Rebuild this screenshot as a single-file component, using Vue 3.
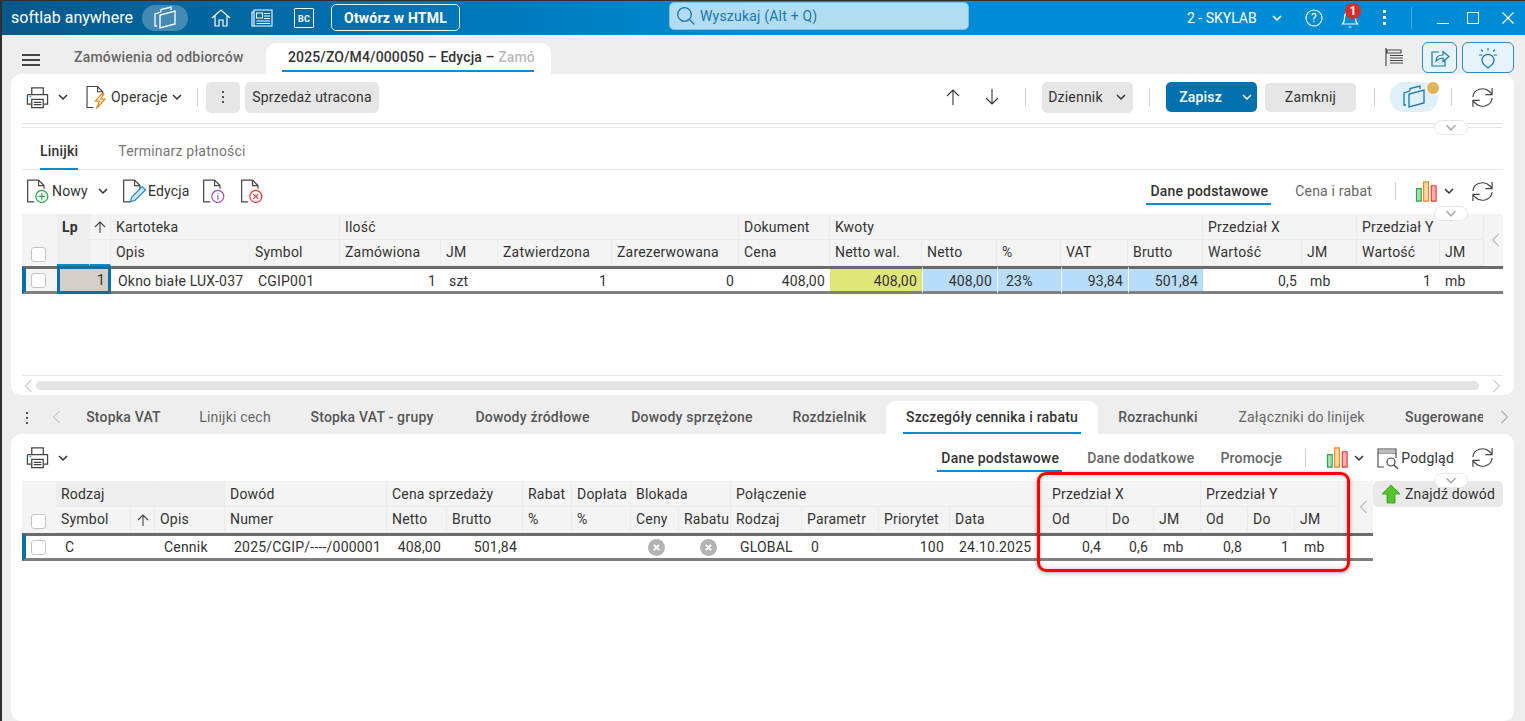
<script setup>
const tabs2 = [
  { t: 'Stopka VAT', w: 113 }, { t: 'Linijki cech', w: 110, light: true }, { t: 'Stopka VAT - grupy', w: 164 },
  { t: 'Dowody źródłowe', w: 157 }, { t: 'Dowody sprzężone', w: 162 }, { t: 'Rozdzielnik', w: 113 },
  { t: 'Szczegóły cennika i rabatu', w: 212, active: true }, { t: 'Rozrachunki', w: 120 },
  { t: 'Załączniki do linijek', w: 167, light: true }, { t: 'Sugerowane powiązania', w: 98, clip: true }
]
const g1 = [
  { t: 'Kartoteka', s: 2 }, { t: 'Ilość', s: 4 }, { t: 'Dokument', s: 1 }, { t: 'Kwoty', s: 5 },
  { t: 'Przedział X', s: 2 }, { t: 'Przedział Y', s: 2 }
]
const h1 = ['Opis', 'Symbol', 'Zamówiona', 'JM', 'Zatwierdzona', 'Zarezerwowana', 'Cena', 'Netto wal.', 'Netto', '%', 'VAT', 'Brutto', 'Wartość', 'JM', 'Wartość', 'JM']
const d1 = [
  { t: 'Okno białe LUX-037', c: 'opis' }, { t: 'CGIP001' }, { t: '1', r: 1 }, { t: 'szt' }, { t: '1', r: 1 }, { t: '0', r: 1 },
  { t: '408,00', r: 1 }, { t: '408,00', r: 1, c: 'yellow' }, { t: '408,00', r: 1, c: 'blue' }, { t: '23%', c: 'blue' },
  { t: '93,84', r: 1, c: 'blue' }, { t: '501,84', r: 1, c: 'blue' }, { t: '0,5', r: 1 }, { t: 'mb' }, { t: '1', r: 1, c: 'pr9' }, { t: 'mb', c: 'pl5' }
]
const g2 = [
  { t: 'Dowód', s: 1 }, { t: 'Cena sprzedaży', s: 2 }, { t: 'Rabat', s: 1 }, { t: 'Dopłata', s: 1 }, { t: 'Blokada', s: 2 },
  { t: 'Połączenie', s: 4 }, { t: 'Przedział X', s: 3 }, { t: 'Przedział Y', s: 3 }
]
const h2 = ['Numer', 'Netto', 'Brutto', '%', '%', 'Ceny', 'Rabatu', 'Rodzaj', 'Parametr', 'Priorytet', 'Data', 'Od', 'Do', 'JM', 'Od', 'Do', 'JM']
const d2 = [
  { t: '2025/CGIP/----/000001' }, { t: '408,00', r: 1 }, { t: '501,84', r: 1 }, { t: '' }, { t: '' }, { x: 1, c: 'x1' }, { x: 1, c: 'x2' },
  { t: 'GLOBAL' }, { t: '0' }, { t: '100', r: 1 }, { t: '24.10.2025' }, { t: '0,4', r: 1 }, { t: '0,6', r: 1 }, { t: 'mb' },
  { t: '0,8', r: 1 }, { t: '1', r: 1 }, { t: 'mb' }
]
</script>

<template>
  <div class="window">
    <svg class="defs" width="0" height="0">
      <symbol id="refresh" viewBox="0 0 24 24"><path d="M2 11.500a10 9 0 0 1 17.500-5.500l2.500 2.500M22 2v7h-7M22 12.500a10 9 0 0 1-17.500 5.500L2 15.500M2 22v-7h7" fill="none" stroke="#444" stroke-width="1.200"/></symbol>
      <symbol id="printer" viewBox="0 0 24 24"><path d="M6 9V2h12v7M1.500 9h21v10H18M6 19H1.500V9" fill="none" stroke="#444" stroke-width="1.300"/><path d="M6 14h12v8.500H6zM8 17h8M8 19.500h8" fill="none" stroke="#444" stroke-width="1.300"/><path d="M3.500 11h2" stroke="#2a9ad8" stroke-width="1.500"/></symbol>
      <symbol id="chev" viewBox="0 0 12 8"><path d="M2 2l4 4 4-4" fill="none" stroke="currentColor" stroke-width="1.500"/></symbol>
      <symbol id="chart" viewBox="0 0 24 24"><path d="M1.500 9h5v13h-5z" fill="#a8dcb4" stroke="#27a844" stroke-width="1.200"/><path d="M9 2h5v20H9z" fill="#fbd9a8" stroke="#ee8a1c" stroke-width="1.200"/><path d="M17 6h5v16h-5z" fill="#f7b0b0" stroke="#e53935" stroke-width="1.200"/></symbol>
      <symbol id="stack" viewBox="0 0 26 24"><path d="M9 6V3.500L19 1v3M5 20H3V8l6-2M8 22V9l15-4v13z" fill="none" stroke="currentColor" stroke-width="1.300"/></symbol>
      <symbol id="doc" viewBox="0 0 24 24"><path d="M8 22H2V2h10l5 5v3M12 2v5h5" fill="none" stroke="#444" stroke-width="1.100"/></symbol>
    </svg>

    <header class="titlebar">
      <div class="tb-left">
        <span class="brand">softlab anywhere</span>
        <span class="stack-pill"><svg width="26" height="24"><use href="#stack"/></svg></span>
        <svg class="tb-home" width="20" height="20" viewBox="0 0 20 20"><path d="M1 10l9-8 9 8M4 8v10h4v-6h4v6h4V8" fill="none" stroke="#fff" stroke-width="1.200"/></svg>
        <svg class="tb-news" width="22" height="19" viewBox="0 0 22 19"><path d="M3 2h18v16H3zM3 4H1v14h2M5.500 5h6v5h-6zM13 5.500h6M13 8h6M13 10.500h6M5.500 13h13.500M5.500 15.500h13.500" fill="none" stroke="#fff" stroke-width="1.100"/></svg>
        <span class="bc">BC</span>
        <button class="html-btn">Otwórz w HTML</button>
      </div>
      <div class="search">
        <svg width="20" height="20" viewBox="0 0 20 20"><circle cx="8.500" cy="8.500" r="6.800" fill="none" stroke="#1878ad" stroke-width="1.300"/><path d="M13.500 13.500l5 5" stroke="#1878ad" stroke-width="1.300"/></svg>
        <span>Wyszukaj (Alt + Q)</span>
      </div>
      <div class="tb-right">
        <span class="company">2 - SKYLAB</span>
        <svg class="c-chev" width="12" height="8"><use href="#chev"/></svg>
        <svg class="help" width="18" height="18" viewBox="0 0 18 18"><circle cx="9" cy="9" r="8" fill="none" stroke="#fff" stroke-width="1.100"/><text x="9" y="13.200" text-anchor="middle" font-size="12" fill="#fff" font-family="Roboto">?</text></svg>
        <span class="bell-wrap">
          <svg width="18" height="22" viewBox="0 0 18 22"><path d="M1.500 17c1.500-1.500 2-3 2-6 0-4 2-7 5.500-7s5.500 3 5.500 7c0 3 .5 4.500 2 6zM7.500 20h3" fill="none" stroke="#fff" stroke-width="1.200"/></svg>
          <span class="badge">1</span>
        </span>
        <span class="kebab light"><i></i><i></i><i></i></span>
        <span class="tb-sep"></span>
        <span class="min"></span>
        <span class="max"></span>
        <svg class="close" width="12" height="12" viewBox="0 0 12 12"><path d="M.5.500l11 11M11.500.500l-11 11" stroke="#fff" stroke-width="1.200"/></svg>
      </div>
    </header>

    <div class="tabs1">
      <span class="burger"><i></i><i></i><i></i></span>
      <span class="tab1">Zamówienia od odbiorców</span>
      <span class="tab1-active"><span class="tab1-text">2025/ZO/M4/000050 – Edycja – <em>Zamó</em></span></span>
      <svg class="list-ico" width="20" height="20" viewBox="0 0 20 20"><path d="M2 1v18M3 3h14v3H3zM6 8.500h13M6 11h13M6 13.500h13M6 16h13" fill="none" stroke="#444" stroke-width="1.100"/></svg>
      <button class="ico-btn share"><svg width="20" height="20" viewBox="0 0 20 20"><path d="M9 4H2v14h13v-6M6 13c0-4 3-6 7-6V3.500l6 5-6 5V10c-3 0-5 1-7 3z" fill="none" stroke="#1878ad" stroke-width="1.200"/></svg></button>
      <button class="ico-btn bulb"><svg width="24" height="22" viewBox="0 0 24 22"><path d="M9 18.500a6 6 0 1 1 6 0l-3 2.500zM12 1v2.500M3 8h3M18 8h3M5 2.500l2 2M19 2.500l-2 2" fill="none" stroke="#1878ad" stroke-width="1.200"/></svg></button>
    </div>

    <section class="panel panel1">
      <div class="toolbar">
        <svg class="ic-print" width="23" height="23"><use href="#printer"/></svg>
        <svg class="chev ch1" width="12" height="8"><use href="#chev"/></svg>
        <span class="doc-wrap op"><svg width="22" height="24" viewBox="1 1 21 22"><use href="#doc" width="24" height="24"/><path d="M16 9l-6 7h4l-3 7 8-9h-4l3-5z" fill="none" stroke="#ee8a1c" stroke-width="1.200"/></svg></span>
        <span class="lbl op-lbl">Operacje</span>
        <svg class="chev ch2" width="12" height="8"><use href="#chev"/></svg>
        <span class="sep s1"></span>
        <button class="gbtn dots"><span class="kebab"><i></i><i></i><i></i></span></button>
        <button class="gbtn utr">Sprzedaż utracona</button>
        <svg class="arr up" width="16" height="18" viewBox="0 0 16 18"><path d="M8 17V2M2 8l6-6 6 6" fill="none" stroke="#333" stroke-width="1.100"/></svg>
        <svg class="arr down" width="16" height="18" viewBox="0 0 16 18"><path d="M8 1v15M2 10l6 6 6-6" fill="none" stroke="#333" stroke-width="1.100"/></svg>
        <span class="sep s2"></span>
        <button class="gbtn dz"><span>Dziennik</span><svg width="12" height="8"><use href="#chev"/></svg></button>
        <span class="sep s3"></span>
        <button class="save"><span>Zapisz</span><svg width="12" height="8"><use href="#chev"/></svg></button>
        <button class="gbtn zamk">Zamknij</button>
        <span class="sep s4"></span>
        <span class="cube"><svg width="26" height="24"><use href="#stack"/></svg><span class="dot"></span></span>
        <span class="sep s5"></span>
        <svg class="rf" width="23" height="23"><use href="#refresh"/></svg>
      </div>
      <div class="rule double"><span class="pill p1"><svg width="14" height="9"><use href="#chev"/></svg></span></div>

      <div class="subtabs">
        <span class="st active">Linijki</span>
        <span class="st">Terminarz płatności</span>
      </div>

      <div class="toolbar2">
        <span class="doc-wrap n"><svg width="24" height="24" viewBox="1 1 21 22"><use href="#doc" width="24" height="24"/><circle cx="15" cy="17" r="5.500" fill="#fff" stroke="#27a844" stroke-width="1.100"/><path d="M15 14v6M12 17h6" stroke="#27a844" stroke-width="1.100"/></svg></span>
        <span class="lbl">Nowy</span>
        <svg class="chev nch" width="12" height="8"><use href="#chev"/></svg>
        <span class="doc-wrap e"><svg width="24" height="24" viewBox="1 1 21 22"><use href="#doc" width="24" height="24"/><path d="M8 22l1.500-4.500L19 8l3 3-9.500 9.500z" fill="#cfe6f7" stroke="#1e88d2" stroke-width="1.100"/></svg></span>
        <span class="lbl">Edycja</span>
        <span class="doc-wrap i"><svg width="24" height="24" viewBox="1 1 21 22"><use href="#doc" width="24" height="24"/><circle cx="15" cy="17" r="5.500" fill="#fff" stroke="#a04fb5" stroke-width="1.100"/><path d="M15 16v4M15 14v1" stroke="#a04fb5" stroke-width="1.100"/></svg></span>
        <span class="doc-wrap x"><svg width="24" height="24" viewBox="1 1 21 22"><use href="#doc" width="24" height="24"/><circle cx="15" cy="17" r="5.500" fill="#fff" stroke="#e53935" stroke-width="1.100"/><path d="M12.800 14.800l4.400 4.400M17.200 14.800l-4.400 4.400" stroke="#e53935" stroke-width="1.100"/></svg></span>
        <span class="view active v1">Dane podstawowe</span>
        <span class="view v2">Cena i rabat</span>
        <span class="sep s6"></span>
        <svg class="ch-ic" width="23" height="23"><use href="#chart"/></svg>
        <svg class="chev ch3" width="12" height="8"><use href="#chev"/></svg>
        <svg class="rf r2i" width="23" height="23"><use href="#refresh"/></svg>
      </div>

      <div class="grid g-top">
        <div class="hc blank"><span class="cb hcb"></span></div>
        <div class="hc lp">Lp</div>
        <div class="hc sort r1"><svg width="14" height="14" viewBox="0 0 14 14"><path d="M7 13V2M2 7l5-5 5 5" fill="none" stroke="#444" stroke-width="1.100"/></svg></div>
        <div v-for="g in g1" :key="g.t" class="hc r1" :style="{ gridColumn: 'span ' + g.s }">{{ g.t }}</div>
        <div class="hc tail t20"><svg width="9" height="14" viewBox="0 0 9 14"><path d="M7.500 1L1.500 7l6 6" fill="none" stroke="#bbb" stroke-width="1.100"/></svg></div>
        <div class="hc lp-ext r2"></div>
        <div v-for="(h, i) in h1" :key="'h1' + i" class="hc sub r2">{{ h }}</div>

        <div class="dc first r3"><span class="cb"></span></div>
        <div class="dc lpv r3 span2">1</div>
        <div v-for="(d, i) in d1" :key="'d1' + i" class="dc r3" :class="[d.c, { right: d.r }]">{{ d.t }}</div>
        <div class="dc r3"></div>
      </div>
      <span class="pill pm"><svg width="14" height="9"><use href="#chev"/></svg></span>

      <div class="spacer"></div>
      <div class="rule"></div>
      <div class="hscroll">
        <svg width="9" height="14" viewBox="0 0 9 14"><path d="M7.500 1L1.500 7l6 6" fill="none" stroke="#ccc" stroke-width="1.100"/></svg>
        <span class="track"></span>
        <svg width="9" height="14" viewBox="0 0 9 14"><path d="M1.500 1l6 6-6 6" fill="none" stroke="#ccc" stroke-width="1.100"/></svg>
      </div>
    </section>

    <div class="tabs2">
      <span class="kebab k2"><i></i><i></i><i></i></span>
      <svg class="tl" width="9" height="14" viewBox="0 0 9 14"><path d="M7.500 1L1.500 7l6 6" fill="none" stroke="#ccc" stroke-width="1.100"/></svg>
      <span v-for="t in tabs2" :key="t.t" class="tab2" :class="{ active: t.active, light: t.light, clip: t.clip }" :style="{ width: t.w + 'px' }"><span class="tab2-t">{{ t.t }}</span></span>
      <svg class="tr" width="9" height="14" viewBox="0 0 9 14"><path d="M1.500 1l6 6-6 6" fill="none" stroke="#aaa" stroke-width="1.100"/></svg>
    </div>

    <section class="panel panel2">
      <div class="toolbar3">
        <svg class="ic-print" width="23" height="23"><use href="#printer"/></svg>
        <svg class="chev pch" width="12" height="8"><use href="#chev"/></svg>
        <span class="view active w1">Dane podstawowe</span>
        <span class="view w2">Dane dodatkowe</span>
        <span class="view w3">Promocje</span>
        <span class="sep s7"></span>
        <svg class="ch-ic2" width="23" height="23"><use href="#chart"/></svg>
        <svg class="chev ch4" width="12" height="8"><use href="#chev"/></svg>
        <svg class="pod-ic" width="22" height="22" viewBox="0 0 22 22"><path d="M7 20H1V2h18v9M1 6h18" fill="none" stroke="#444" stroke-width="1.100"/><path d="M2 3h16v3H2z" fill="#bbb"/><circle cx="14" cy="15" r="4" fill="none" stroke="#444" stroke-width="1.200"/><path d="M17 18l4 4" stroke="#444" stroke-width="1.300"/></svg>
        <span class="lbl pod">Podgląd</span>
        <svg class="rf r3i" width="23" height="23"><use href="#refresh"/></svg>
      </div>

      <div class="tbl-row">
        <div class="grid g-bot">
          <div class="hc blank"><span class="cb hcb"></span></div>
          <div class="hc dark r1 span2">Rodzaj</div>
          <div class="hc dark r1"></div>
          <div v-for="g in g2" :key="g.t" class="hc r1" :style="{ gridColumn: 'span ' + g.s }">{{ g.t }}</div>
          <div class="hc tail t22"><svg width="9" height="14" viewBox="0 0 9 14"><path d="M7.500 1L1.500 7l6 6" fill="none" stroke="#bbb" stroke-width="1.100"/></svg></div>
          <div class="hc sub r2">Symbol</div>
          <div class="hc sub sort2 r2"><svg width="14" height="14" viewBox="0 0 14 14"><path d="M7 13V2M2 7l5-5 5 5" fill="none" stroke="#444" stroke-width="1.100"/></svg></div>
          <div class="hc sub r2">Opis</div>
          <div v-for="(h, i) in h2" :key="'h2' + i" class="hc sub r2">{{ h }}</div>

          <div class="dc first r3"><span class="cb"></span></div>
          <div class="dc r3 span2 sym">C</div>
          <div class="dc r3">Cennik</div>
          <div v-for="(d, i) in d2" :key="'d2' + i" class="dc r3" :class="[d.c, { right: d.r, center: d.x }]">
            <svg v-if="d.x" width="17" height="17" viewBox="0 0 17 17"><circle cx="8.500" cy="8.500" r="8.500" fill="#b3b3b3"/><path d="M5.800 5.800l5.400 5.400M11.200 5.800l-5.400 5.400" stroke="#fff" stroke-width="1.800"/></svg>
            <template v-else>{{ d.t }}</template>
          </div>
          <div class="dc r3"></div>
        </div>
        <button class="find">
          <svg width="20" height="20" viewBox="0 0 20 20"><path d="M10 1l9 9h-5v9H6v-9H1z" fill="#57c22c" stroke="#2f9a12" stroke-width=".8"/></svg>
          <span>Znajdź dowód</span>
        </button>
      </div>

      <span class="pill p2"><svg width="14" height="9"><use href="#chev"/></svg></span>
      <div class="redbox"></div>
    </section>
  </div>
</template>

<style>
html, body { margin: 0; background: #eee; overflow: hidden; }
</style>

<style scoped>
* { box-sizing: border-box; }
.window { position: relative; width: 1525px; height: 721px; background: #eee; overflow: hidden; font: 400 14px/1 Roboto, sans-serif; color: #333; letter-spacing: .2px; }
.window::after { content: ""; position: absolute; inset: 0; border-left: 2px solid #2f2f2f; border-top: 1px solid #2f2f2f; pointer-events: none; }
.defs { position: absolute; }
button { font: inherit; letter-spacing: inherit; border: 0; padding: 0; color: inherit; }
i { display: block; }

.titlebar { height: 35px; display: grid; grid-template-columns: 669px 300px 1fr; align-items: center; background: linear-gradient(90deg, #06588a 0, #0079bd 33%, #008cd4 50%, #008cd4 100%); color: #fff; }
.tb-left { display: flex; align-items: center; padding-left: 11px; }
.brand { font-size: 16px; letter-spacing: 0; width: 131px; }
.stack-pill { width: 46px; height: 26px; border-radius: 13px; background: rgba(255,255,255,.25); display: flex; align-items: center; justify-content: center; color: #fff; }
.tb-home { margin-left: 23px; }
.tb-news { margin-left: 20px; }
.bc { margin-left: 21px; width: 20px; height: 20px; border: 1px solid #fff; border-radius: 1px; font-size: 9px; font-weight: 700; display: flex; align-items: flex-end; justify-content: center; padding-bottom: 3px; }
.html-btn { margin-left: 17px; width: 129px; height: 27px; background: transparent; border: 1.500px solid #e3f3fb; border-radius: 5px; color: #fff; font-weight: 700; font-size: 14px; }
.search { height: 28px; margin-top: -3px; background: #b2dcf2; border-radius: 5px; border: 1px solid #79c1e8; display: flex; align-items: center; gap: 4px; padding-left: 6px; color: #1878ad; font-size: 14px; }
.tb-right { display: flex; align-items: center; padding-left: 218px; position: relative; height: 35px; }
.company { width: 71px; font-size: 14px; letter-spacing: 0; }
.c-chev { margin-left: 13px; color: #fff; }
.help { margin-left: 22px; }
.bell-wrap { position: relative; margin-left: 18px; height: 22px; display: block; }
.badge { position: absolute; left: 4px; top: -4px; width: 16px; height: 16px; background: #d32f2f; border-radius: 50%; font-size: 12px; font-weight: 700; color: #fff; display: flex; align-items: center; justify-content: center; letter-spacing: 0; }
.kebab { display: inline-flex; flex-direction: column; gap: 3px; align-items: center; }
.kebab i { width: 2px; height: 2px; background: #555; }
.kebab.light { margin-left: 24px; }
.kebab.light i { width: 3px; height: 3px; background: #fff; }
.tb-sep { width: 1px; height: 22px; background: rgba(255,255,255,.25); margin-left: 25px; }
.min { margin-left: 25px; width: 12px; height: 9px; border-bottom: 1px solid #fff; margin-top: 3px; }
.max { margin-left: 18px; width: 12px; height: 12px; border: 1px solid #fff; }
.close { margin-left: 23px; }

.tabs1 { height: 39px; display: flex; align-items: flex-end; position: relative; }
.burger { position: relative; top: -8px; margin-left: 22px; width: 18px; display: flex; flex-direction: column; gap: 3px; }
.burger i { height: 2px; background: #444; }
.tab1 { margin-left: 34px; width: 192px; height: 31px; color: #666; font-weight: 500; line-height: 28px; }
.tab1-active { width: 285px; height: 31px; background: #fff; border-radius: 10px 10px 0 0; padding: 0 17px 0 16px; }
.tab1-text { display: block; height: 29px; line-height: 28px; border-bottom: 2px solid #0c8ad0; padding-left: 6px; white-space: nowrap; font-weight: 500; color: #333; letter-spacing: .12px; overflow: hidden; }
.tab1-text em { font-style: normal; color: #bbb; }
.list-ico { position: absolute; left: 1384px; top: 12px; }
.ico-btn { position: absolute; top: 7px; height: 31px; background: #e6f3fa; border: 1px solid #2b89bd; border-radius: 6px; display: flex; align-items: center; justify-content: center; }
.share { left: 1422px; width: 35px; }
.bulb { left: 1462px; width: 52px; }

.panel { position: relative; margin: 0 11px; background: #fff; border-radius: 10px; }
.panel1 { height: 321px; padding: 0 11px; }
.toolbar { height: 49px; position: relative; display: flex; align-items: center; padding: 0 0 3px 4px; }
.ic-print { flex: none; }
.chev { color: #333; flex: none; }
.ch1 { margin-left: 8px; }
.doc-wrap { display: flex; flex: none; }
.op { margin-left: 17px; }
.lbl { white-space: nowrap; }
.op-lbl { margin-left: 3px; width: 55px; }
.ch2 { margin-left: 5px; }
.sep { width: 1px; height: 18px; background: #cfcfcf; flex: none; }
.s1 { margin-left: 14px; }
.gbtn { height: 31px; background: #e6e6e6; border-radius: 5px; flex: none; color: #333; }
.dots { margin-left: 8px; width: 34px; display: flex; align-items: center; justify-content: center; }
.utr { margin-left: 5px; width: 134px; }
.arr { flex: none; }
.up { margin-left: 566px; }
.down { margin-left: 23px; }
.s2 { margin-left: 25px; }
.dz { margin-left: 16px; width: 91px; display: flex; align-items: center; justify-content: center; gap: 12px; }
.s3 { margin-left: 16px; height: 18px; }
.save { margin-left: 16px; width: 91px; height: 30px; background: #0271ad; color: #fff; border-radius: 5px; display: flex; align-items: center; justify-content: flex-end; gap: 19px; padding-right: 4px; font-weight: 500; flex: none; }
.zamk { margin-left: 8px; width: 91px; height: 29px; }
.s4 { margin-left: 18px; }
.cube { margin-left: 15px; width: 48px; height: 30px; background: #e0f0f9; border-radius: 14px; position: relative; display: flex; align-items: center; justify-content: center; color: #1878ad; flex: none; }
.dot { position: absolute; right: -2px; top: -1px; width: 14px; height: 14px; background: #e0b45c; border: 1px solid #fff; border-radius: 50%; }
.s5 { margin-left: 13px; }
.rf { flex: none; }
.toolbar .rf { margin-left: 19px; }

.rule { height: 1px; background: #e6e6e6; position: relative; }
.rule.double { height: 5px; border-top: 1px solid #e6e6e6; border-bottom: 1px solid #e6e6e6; background: #fff; }
.pill { position: absolute; width: 34px; height: 15px; background: #fff; border: 1px solid #e6e6e6; border-radius: 8px; color: #aaa; display: flex; align-items: center; justify-content: center; z-index: 3; }
.p1 { left: 1412px; top: -4px; }
.pm { left: 1423px; top: 132px; }
.subtabs { height: 42px; display: flex; align-items: flex-end; border-bottom: 1px solid #e6e6e6; padding-left: 18px; gap: 40px; }
.st { height: 41px; line-height: 46px; color: #777; position: relative; }
.st.active { color: #333; font-weight: 500; }
.st.active::after { content: ""; position: absolute; left: 0; right: 0; bottom: -1px; height: 2px; background: #0c8ad0; }

.toolbar2 { height: 44px; display: flex; align-items: center; padding: 0 9px 2px 4px; position: relative; }
.nch { margin-left: 9px; }
.toolbar2 .lbl { margin-left: 2px; }
.e { margin-left: 13px; }
.i { margin-left: 12px; }
.x { margin-left: 14px; }
.view { color: #666; font-weight: 500; position: relative; flex: none; white-space: nowrap; }
.view.active { color: #333; }
.view.active::after { content: ""; position: absolute; left: -4px; right: -3px; bottom: -7px; height: 2px; background: #0c8ad0; }
.v1 { margin-left: auto; }
.v2 { margin-left: 27px; font-weight: 400; }
.s6 { margin-left: 23px; }
.ch-ic { margin-left: 19px; flex: none; }
.ch3 { margin-left: 5px; }
.toolbar2 .rf { margin-left: 16px; }

.grid { display: grid; grid-template-rows: 26px 26px 28px; }
.g-top { grid-template-columns: 35px 33px 21px 139px 90px 101px 57px 114px 127px 91px 92px 75px 64px 67px 75px 99px 55px 83px 44px 19px; }
.g-bot { grid-template-columns: 34px 75px 24px 70px 162px 60px 76px 49px 59px 48px 52px 71px 77px 71px 97px 60px 47px 47px 47px 47px 44px 34px; width: 1351px; flex: none; }
.r1 { grid-row: 1; }
.r2 { grid-row: 2; }
.r3 { grid-row: 3; }
.span2 { grid-column: span 2; }
.t20 { grid-column: 20; grid-row: 1 / 3; }
.t22 { grid-column: 22; grid-row: 1 / 3; }
.hc { background: #f4f4f4; border-right: 1px solid #ececec; border-bottom: 1px solid #ececec; padding: 0 5px; display: flex; align-items: center; white-space: nowrap; overflow: hidden; color: #333; }
.hc.sub { padding-bottom: 2px; }
.blank { grid-column: 1; grid-row: 1 / 3; align-items: flex-end; border-bottom: 0; padding: 0 0 4px 9px; border-right-color: transparent; }
.lp { grid-column: 2; grid-row: 1 / 3; font-weight: 700; align-items: flex-start; padding-top: 6px; background: #eee; border-bottom: 2px solid #0c8ad0; }
.lp-ext { grid-column: 3; background: #f4f4f4; border-bottom: 2px solid #0c8ad0; }
.sort { background: #f4f4f4; justify-content: center; padding: 0; }
.tail { justify-content: center; padding: 0 0 0 4px; border: 0; }
.t22.tail { padding-left: 14px; }
.dark { background: #eee; }
.hc.sort2 { padding: 0; justify-content: center; }
.cb { display: block; width: 15px; height: 15px; border: 1px solid #c4c4c4; border-radius: 3px; background: #fff; }
.dc { background: #fff; border-top: 3px solid #6b6b6b; border-bottom: 3px solid #808080; padding: 0 5px 0 8px; display: flex; align-items: center; white-space: nowrap; }
.g-top .dc { padding-top: 1px; }
.dc.right { justify-content: flex-end; padding-left: 0; }
.dc.center { justify-content: center; padding: 0; }
.dc.first { background: #f4f4f4; padding: 0 0 0 5px; border-left: 4px solid #0c6ea6; }
.g-bot .dc.first { background: #fff; }
.dc.lpv { background: #d4d0c9; border: 3px solid #0c6ea6; justify-content: flex-end; padding: 0 3px 0 0; }
.dc.opis { padding-left: 7px; }
.dc.pr9 { padding-right: 9px; }
.dc.pl5 { padding-left: 5px; }
.yellow { background: #dfe678; }
.blue { background: #b9dcf8; border-left: 1px solid #fff; }
.spacer { height: 81px; }
.hscroll { height: 19px; display: flex; align-items: center; padding-left: 2px; }
.track { margin-left: 3px; width: 1443px; height: 9px; border-radius: 5px; background: #e4e4e4; margin-right: 13px; }

.tabs2 { height: 39px; display: flex; align-items: flex-end; position: relative; padding-left: 67px; }
.k2 { position: absolute; left: 26px; top: 17px; }
.tl { position: absolute; left: 52px; top: 15px; }
.tr { position: absolute; left: 1500px; top: 15px; }
.tab2 { height: 33px; flex: none; color: #555; font-weight: 500; display: block; line-height: 32px; text-align: center; overflow: hidden; white-space: nowrap; }
.tab2.light { font-weight: 400; color: #666; }
.tab2.active { background: #fff; border-radius: 10px 10px 0 0; color: #333; padding: 0 17px; }
.tab2.clip { text-align: left; padding-left: 20px; }
.tab2-t { display: block; }
.tab2.active .tab2-t { height: 33px; border-bottom: 2px solid #0c8ad0; }
.panel2 { height: 287px; padding: 0 11px; }
.toolbar3 { height: 47px; display: flex; align-items: center; padding: 0 9px 0 4px; position: relative; }
.pch { margin-left: 8px; }
.w1 { margin-left: auto; }
.w2 { margin-left: 28px; }
.w3 { margin-left: 26px; }
.s7 { margin-left: 23px; }
.ch-ic2 { margin-left: 20px; flex: none; }
.ch4 { margin-left: 4px; }
.pod-ic { margin-left: 12px; flex: none; }
.pod { margin-left: 2px; }
.r3i { margin-left: 17px; }
.tbl-row { display: flex; align-items: flex-start; }
.g-bot .dc { padding-left: 9px; }
.g-bot .dc.right { padding-right: 6px; padding-left: 0; }
.g-bot .dc.center { padding: 0; }
.g-bot .dc.x1 { padding-left: 2px; }
.g-bot .dc.x2 { padding-left: 6px; }
.g-bot .dc.first { padding-left: 5px; }
.find { width: 130px; height: 26px; background: #e9e9e9; border-radius: 5px; display: flex; align-items: center; justify-content: center; gap: 4px; color: #333; flex: none; }
.p2 { left: 1423px; top: 39px; }
.redbox { position: absolute; left: 1026px; top: 38px; width: 313px; height: 100px; border: 3px solid #f00; border-radius: 9px; box-shadow: 0 1px 4px rgba(0,0,0,.35), inset 0 0 4px rgba(0,0,0,.25); pointer-events: none; }
</style>
